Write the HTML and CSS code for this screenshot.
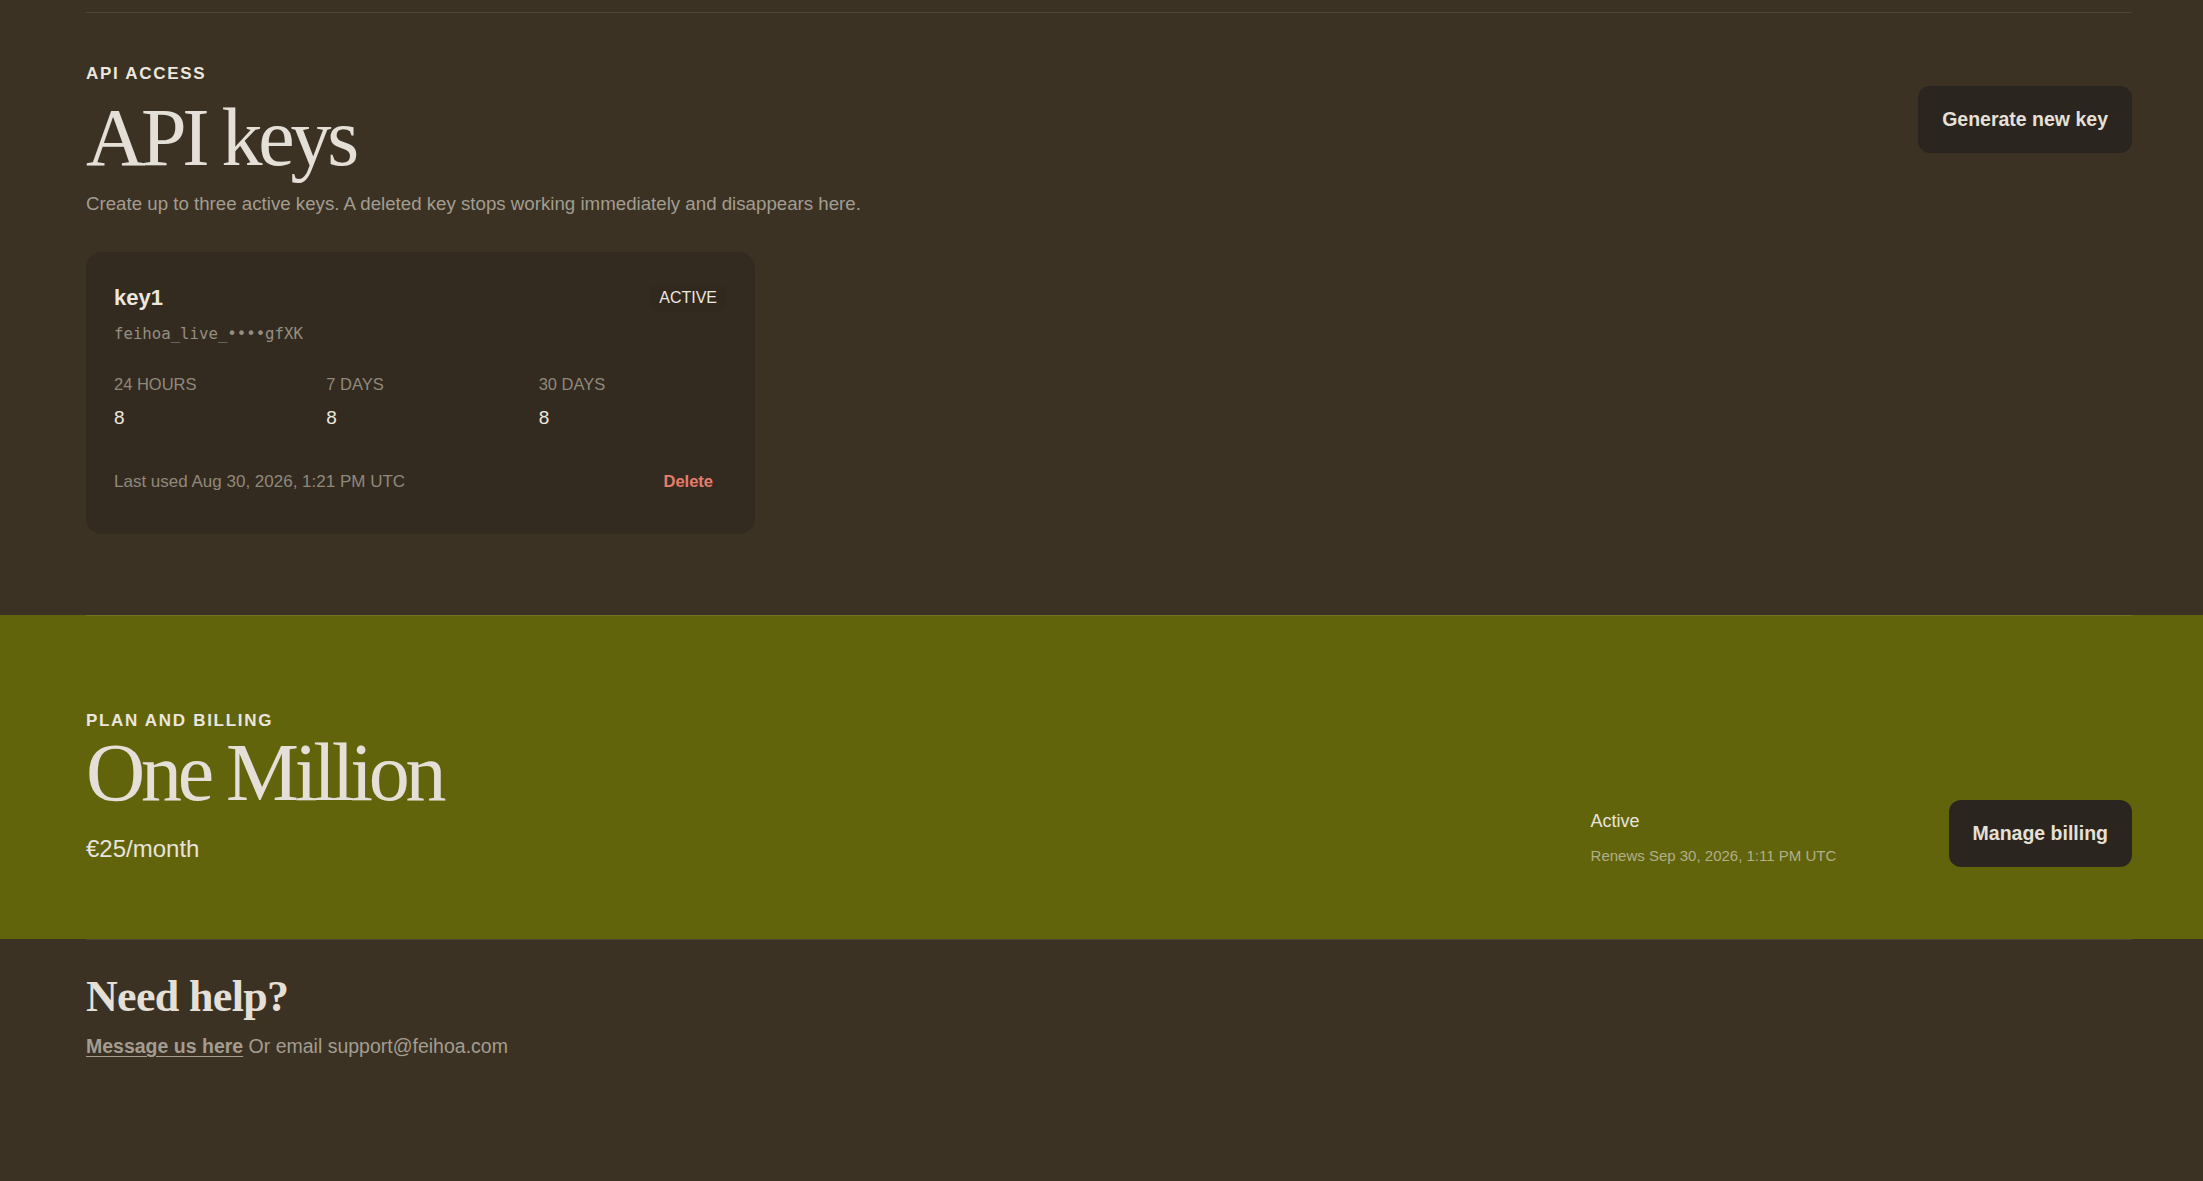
FILE: index.html
```html
<!DOCTYPE html>
<html lang="en">

<head>
    <meta charset="UTF-8">
    <meta name="viewport" content="width=device-width, initial-scale=1.0">
    <title>Account</title>
    <link rel="stylesheet" href="styles.css">
</head>

<body>

    <!-- API keys -->
    <section class="section section-keys">
        <div class="wrap">
            <div class="head">
                <div>
                    <div class="eyebrow">API access</div>
                    <h1 class="title">API keys</h1>
                </div>
                <button class="btn btn-head">Generate new key</button>
            </div>
            <p class="lead">Create up to three active keys. A deleted key stops working immediately and disappears here.</p>

            <div class="key-card">
                <div class="key-head">
                    <div>
                        <div class="key-name">key1</div>
                        <div class="key-token">feihoa_live_••••gfXK</div>
                    </div>
                    <span class="badge">ACTIVE</span>
                </div>
                <div class="stats">
                    <div>
                        <div class="stat-label">24 HOURS</div>
                        <div class="stat-value">8</div>
                    </div>
                    <div>
                        <div class="stat-label">7 DAYS</div>
                        <div class="stat-value">8</div>
                    </div>
                    <div>
                        <div class="stat-label">30 DAYS</div>
                        <div class="stat-value">8</div>
                    </div>
                </div>
                <div class="key-foot">
                    <span class="last-used">Last used Aug 30, 2026, 1:21 PM UTC</span>
                    <button class="link-danger">Delete</button>
                </div>
            </div>
        </div>
    </section>

    <!-- Plan -->
    <section class="section section-plan">
        <div class="wrap plan-row">
            <div>
                <div class="eyebrow">Plan and billing</div>
                <h1 class="title title-plan">One Million</h1>
                <div class="price">€25/month</div>
            </div>
            <div class="plan-side">
                <div class="status">
                    <div class="status-main">Active</div>
                    <div class="status-sub">Renews Sep 30, 2026, 1:11 PM UTC</div>
                </div>
                <button class="btn">Manage billing</button>
            </div>
        </div>
    </section>

    <!-- Help -->
    <section class="section section-help">
        <div class="wrap">
            <h2 class="help-title">Need help?</h2>
            <p class="help-text"><a href="#" class="help-link">Message us here</a> Or email support@feihoa.com</p>
        </div>
    </section>

</body>

</html>
```

FILE: styles.css
```css
body {
    margin: 0;
    padding-top: 12px;
    min-height: 1169px;
    background-color: #3b3223;
    color: #e4dfd7;
    font-family: "Liberation Sans", Arial, sans-serif;
}

.wrap {
    margin: 0 71px 0 86px;
    border-top: 1px solid rgba(228, 223, 215, 0.12);
}

.section-keys .wrap {
    padding: 51px 0 81px;
}

.head {
    display: flex;
    justify-content: space-between;
    align-items: center;
}

.eyebrow {
    font-size: 17px;
    line-height: 20px;
    font-weight: bold;
    letter-spacing: 0.1em;
    text-transform: uppercase;
    color: #ebe6de;
    margin-bottom: 13px;
}

.title {
    margin: 0;
    font-family: "Liberation Serif", "Times New Roman", serif;
    font-weight: normal;
    font-size: 82px;
    line-height: 82px;
    letter-spacing: -0.052em;
    color: #e4dfd7;
}

.btn {
    background-color: #2a251f;
    color: #e6e0d6;
    border: none;
    border-radius: 12px;
    padding: 22px 24px;
    font-family: inherit;
    font-size: 19.5px;
    font-weight: bold;
    cursor: pointer;
}

.btn-head {
    margin-bottom: 5px;
}

.lead {
    margin: 14px 0 0;
    font-size: 18.7px;
    color: #a39d91;
}

/* key card */
.key-card {
    width: 669px;
    box-sizing: border-box;
    margin-top: 37px;
    padding: 33px 28px 33px;
    background-color: #342b20;
    border-radius: 16px;
}

.key-head {
    display: flex;
    justify-content: space-between;
    align-items: flex-start;
}

.key-name {
    font-size: 22px;
    line-height: 26px;
    font-weight: bold;
    color: #ece7df;
}

.key-token {
    margin-top: 13px;
    font-family: "DejaVu Sans Mono", "Liberation Mono", monospace;
    font-size: 15.7px;
    line-height: 20px;
    color: #958f82;
}

.badge {
    padding: 4px 10px;
    line-height: 18px;
    font-size: 16px;
    color: #ece7df;
    background-color: rgba(0, 0, 0, 0.04);
    border-radius: 6px;
}

.stats {
    display: grid;
    grid-template-columns: repeat(3, 1fr);
    gap: 24px;
    margin-top: 30px;
}

.stat-label {
    font-size: 16.5px;
    line-height: 20px;
    color: #8f897c;
}

.stat-value {
    margin-top: 12px;
    font-size: 19px;
    line-height: 24px;
    color: #ece7df;
}

.key-foot {
    display: flex;
    justify-content: space-between;
    align-items: center;
    margin-top: 32px;
}

.last-used {
    font-size: 17px;
    color: #8f897c;
}

.link-danger {
    background: none;
    border: none;
    padding: 10px 14px;
    font-family: inherit;
    font-size: 16.5px;
    font-weight: bold;
    color: #e47d6b;
    cursor: pointer;
}

/* plan */
.section-plan {
    background-color: #61640b;
}

.plan-row {
    display: flex;
    justify-content: space-between;
    align-items: flex-end;
    padding: 95px 0 72px;
}

.section-plan .eyebrow {
    margin-bottom: 1px;
}

.price {
    margin-top: 17px;
    font-size: 24px;
    line-height: 36px;
    color: #e8e3db;
}

.plan-side {
    display: flex;
    align-items: center;
    gap: 48px;
}

.status {
    width: 310px;
    padding-top: 8px;
}

.status-main {
    font-size: 18px;
    color: #e8e3db;
    margin-bottom: 15px;
}

.status-sub {
    font-size: 15px;
    color: #b2af87;
}

/* help */
.section-help .wrap {
    padding-top: 33px;
}

.help-title {
    margin: 0;
    font-family: "Liberation Serif", "Times New Roman", serif;
    font-size: 44px;
    line-height: 1.1;
    letter-spacing: -0.015em;
    color: #e4dfd7;
}

.help-text {
    margin: 14px 0 0;
    font-size: 19.5px;
    color: #a39d91;
}

.help-link {
    font-weight: bold;
    color: #a39d91;
    text-underline-offset: 3px;
}
```
